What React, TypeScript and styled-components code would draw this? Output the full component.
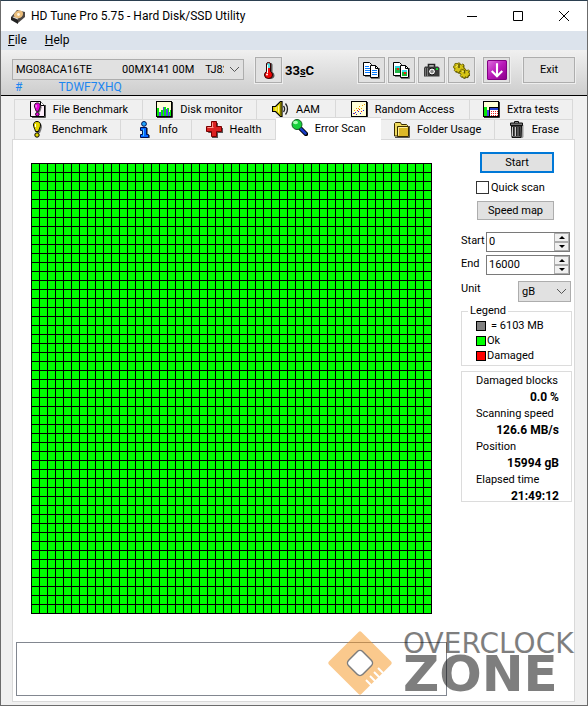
import React, { useState } from "react";
import styled, { createGlobalStyle, css } from "styled-components";

const UI = `Roboto, "Liberation Sans", Arial, sans-serif`;

const GlobalStyle = createGlobalStyle`
  * { box-sizing: border-box; }
  body { margin: 0; background: #f0f0f0; color: #000; font: 11px/14px ${UI}; }
  button, input, select, textarea { font: inherit; color: inherit; margin: 0; border-radius: 0; }
`;

const Window = styled.div`
  position: relative;
  display: flex;
  flex-direction: column;
  min-height: 100vh;
  border: 1px solid #6b6b6b;
  border-top-color: #2b3f50;
  background: #f0f0f0;
`;

const TitleBar = styled.header`
  display: flex;
  align-items: center;
  height: 30px;
  padding-left: 8px;
  background: #fff;
  font: 12px/16px ${UI};
`;

const Title = styled.h1`
  flex: 1;
  margin: 0 0 0 5px;
  font: inherit;
  white-space: nowrap;
`;

const CaptionButton = styled.button`
  display: grid;
  place-items: center;
  width: 46px;
  height: 30px;
  padding: 0;
  border: 0;
  background: none;
`;

const MenuBar = styled.nav`
  display: flex;
  gap: 18px;
  height: 19px;
  padding-left: 7px;
  background: #dce3ec;
`;

const MenuItem = styled.button`
  padding: 0;
  border: 0;
  background: none;
  font: 12px/19px ${UI};
`;

const Toolbar = styled.div`
  display: flex;
  align-items: flex-start;
  height: 46px;
  padding: 7px 12px 0 11px;
  border-bottom: 1px solid #000;
  background: linear-gradient(#f0f0f0, #cdcdcd);
`;

const DriveBlock = styled.div`
  width: 232px;
  padding-top: 2px;
`;

const Serial = styled.div`
  display: flex;
  gap: 36px;
  padding-left: 3px;
  font-size: 12px;
  line-height: 14px;
  color: #1e86f0;
`;

const SelectBox = styled.div`
  display: grid;
  align-items: center;
  height: 21px;
  border: 1px solid #adadad;
  background: #e1e1e1;
  > * { grid-area: 1 / 1; }
  > svg { justify-self: end; margin-right: 3px; pointer-events: none; }
`;

const Select = styled.select`
  appearance: none;
  width: 100%;
  height: 19px;
  padding: 0 19px 0 3px;
  border: 0;
  background: none;
  white-space: pre;
`;

const IconButton = styled.button<{ $gap?: number; $wide?: boolean }>`
  display: grid;
  place-items: center;
  flex: none;
  width: ${(p) => (p.$wide ? 52 : 27)}px;
  height: 26px;
  margin-left: ${(p) => p.$gap ?? 3}px;
  padding: 0;
  border: 1px solid #adadad;
  background: #e1e1e1;
  box-shadow: 0 0 0 1px #eeeeee;
`;

const Temperature = styled.output`
  flex: 1;
  padding: 6px 0 0 3px;
  font: bold 13px/16px ${UI};
  small { font-size: 11px; text-decoration: underline; }
`;

const Tabs = styled.div`
  margin-top: 3px;
  padding: 0 14px 0 13px;
`;

const TabRow = styled.div`
  display: flex;
  height: 20px;
  border-left: 1px solid #d9d9d9;
`;

const Tab = styled.button<{ $grow: number; $active?: boolean }>`
  display: flex;
  flex: ${(p) => p.$grow} 1 0;
  align-items: center;
  justify-content: center;
  gap: 7px;
  min-width: 0;
  padding: 0;
  border: solid #d9d9d9;
  border-width: 1px 1px 0 0;
  background: #f0f0f0;
  white-space: nowrap;
  svg { flex: none; }
  ${(p) =>
    p.$active &&
    css`
      position: relative;
      z-index: 1;
      align-items: flex-start;
      height: 23px;
      margin-top: -2px;
      padding-top: 3px;
      line-height: 16px;
      border-width: 1px 0 0;
      background: #fff;
      svg { margin-top: -2px; }
    `}
`;

const Panel = styled.main`
  display: grid;
  flex: 1;
  grid-template-columns: minmax(0, 1fr) 111px;
  grid-template-rows: 1fr auto;
  margin: 0 12px 3px 11px;
  padding: 12px 2px 5px 3px;
  border: 1px solid #d9d9d9;
  background: #fff;
`;

const BlockMap = styled.div`
  display: grid;
  grid-template-columns: repeat(50, 1fr);
  grid-auto-rows: 8px;
  gap: 1px;
  align-self: start;
  margin: 11px 29px 28px 15px;
  padding: 1px;
  background: #000;
`;

const Block = styled.i`
  background: #00ff00;
`;

const Log = styled.textarea`
  display: block;
  width: auto;
  height: 54px;
  margin-right: 14px;
  border: 1px solid #828790;
  background: #fff;
  resize: none;
`;

const Side = styled.aside`
  display: flex;
  flex-direction: column;
`;

const PushButton = styled.button<{ $primary?: boolean }>`
  height: ${(p) => (p.$primary ? 21 : 19)}px;
  margin: 0 18px 0 ${(p) => (p.$primary ? 19 : 16)}px;
  padding: 0;
  border: ${(p) => (p.$primary ? "2px solid #0078d7" : "1px solid #adadad")};
  background: #e1e1e1;
`;

const Check = styled.label`
  display: flex;
  align-items: center;
  gap: 2px;
  margin: 8px 0 7px 15px;
  height: 13px;
  white-space: nowrap;
  input {
    appearance: none;
    width: 13px;
    height: 13px;
    border: 1px solid #333;
    background: #fff;
  }
  input:checked { background: #0078d7; }
`;

const Field = styled.div<{ $first?: boolean }>`
  display: grid;
  grid-template-columns: 25px 84px;
  align-items: start;
  margin-top: ${(p) => (p.$first ? 12 : 3)}px;
  label { padding-top: 2px; }
`;

const Spin = styled.div`
  display: grid;
  grid-template-columns: 1fr 15px;
  grid-template-rows: 9px 9px;
  height: 20px;
  border: 1px solid #7a7a7a;
  background: #fff;
  input {
    grid-row: 1 / 3;
    width: 100%;
    min-width: 0;
    padding: 0 2px;
    border: 0;
    outline: 0;
    background: none;
  }
  button {
    display: grid;
    place-items: center;
    padding: 0;
    border: 1px solid #adadad;
    background: #f0f0f0;
  }
`;

const UnitRow = styled.div`
  display: grid;
  grid-template-columns: 57px 53px;
  align-items: start;
  margin-top: 6px;
  label { padding-top: 1px; }
`;

const Legend = styled.fieldset`
  height: 62px;
  margin: 2px 0 0;
  padding: 0 0 0 14px;
  border: 1px solid #dcdcdc;
  legend { margin-left: -8px; padding: 0 2px; line-height: 14px; }
`;

const LegendItem = styled.div<{ $color: string; $indent?: boolean }>`
  display: flex;
  align-items: center;
  gap: ${(p) => (p.$indent ? 5 : 1)}px;
  height: 15px;
  &::before {
    content: "";
    width: 8px;
    height: 8px;
    border: 1px solid #000;
    background: ${(p) => p.$color};
  }
`;

const Stats = styled.dl`
  height: 131px;
  margin: 5px 0 0;
  padding: 2px 12px 0 14px;
  border: 1px solid #dcdcdc;
  dt { height: 15px; line-height: 14px; }
  dd { height: 18px; margin: 0; font-weight: bold; font-size: 12px; line-height: 16px; text-align: right; }
`;

const Watermark = styled.div`
  position: absolute;
  right: 8px;
  bottom: 8px;
  display: flex;
  gap: 9px;
  align-items: center;
  opacity: 0.5;
  pointer-events: none;
`;

const Brand = styled.div`
  width: 176px;
  font: 28px/22px "DejaVu Sans", sans-serif;
  strong { display: block; font-size: 50px; line-height: 38px; font-weight: bold; }
`;

const Chevron = () => (
  <svg width="11" height="7" viewBox="0 0 11 7" fill="none" stroke="#555">
    <path d="M1 1l4.500 4.500L10 1" />
  </svg>
);

const Svg = ({ children, size = 17 }: { children: React.ReactNode; size?: number }) => (
  <svg width={size} height={size} viewBox="0 0 17 17" aria-hidden="true">
    {children}
  </svg>
);

const DriveIcon = () => (
  <Svg size={17}>
    <path d="M2 9L8 2l8 2v5l-7 6-7-4z" fill="#4b4744" />
    <path d="M2 9l7 3v4l-7-4z" fill="#222" />
    <ellipse cx="9.500" cy="6.500" rx="4.800" ry="3.800" fill="#e9bd7c" transform="rotate(-30 9.500 6.500)" />
    <circle cx="9.500" cy="6.500" r="1.400" fill="#fff7e4" />
    <path d="M4 9l5 2" stroke="#ddd" />
  </Svg>
);

const Thermometer = () => (
  <Svg>
    <path d="M9 1h2.500l1 1.500V10q2 1 2 3.500T11 17H8z" fill="#555" />
    <path d="M6.500 2Q6.500.5 8.500.5t2 1.500v7.500q2 1 2 3.500 0 3.500-4 3.500t-4-3.500q0-2.500 2-3.500z" fill="#ee0505" stroke="#300" />
    <path d="M7 2.500Q7 1 8.500 1T10 2.500V6H7z" fill="#4fe3e8" />
    <path d="M7.500 3v8" stroke="#fff" />
    <circle cx="7" cy="12.500" r="1" fill="#fff" />
  </Svg>
);

const CopyPages = ({ image }: { image?: boolean }) => (
  <Svg>
    <path d="M2 14.500h6M16.500 6v10.500H8" stroke="#777" fill="none" />
    <path d="M.5.5h6l2 2v11h-8z" fill="#fff" stroke="#000" />
    <path d="M7.500 3.500h5l3 3v9h-8z" fill="#fff" stroke="#000" />
    <path d="M12.500 3.500v3h3" fill="none" stroke="#000" />
    {image ? (
      <>
        <path d="M2 4h5v7H2z" fill="#21b447" />
        <path d="M2 4h5v2H2z" fill="#2bd0df" />
        <path d="M9 8h5v6H9z" fill="#18b536" />
        <path d="M9 8h5v2H9z" fill="#3bdff0" />
        <path d="M11 10h2v2h-2zM4 6h2v2H4z" fill="#f02010" />
      </>
    ) : (
      <path d="M2 4.500h4M2 6.500h5M2 8.500h5M2 10.500h5M9 8.500h5M9 10.500h5M9 12.500h5" stroke="#087cff" />
    )}
  </Svg>
);

const Camera = () => (
  <Svg>
    <path d="M5.500 5V2.500h6V5" fill="none" stroke="#222" strokeWidth="1.600" />
    <path d="M1 6l1-1.500h13L16.500 6v8.500H1z" fill="#3a3a3a" />
    <path d="M2.500 6v8M4.500 6v8" stroke="#777" />
    <circle cx="9" cy="9.500" r="3.500" fill="#eee" stroke="#111" />
    <circle cx="9" cy="9.500" r="1.700" fill="#888" />
    <path d="M13 6h2v2h-2z" fill="#16dc35" />
  </Svg>
);

const cog = "M-1-5h2l.5 1.500 1.500.5 1.500-1 1.200 1.200-1 1.500.5 1.300H6v2l-1.500.500-.5 1.500-1.500 1L1 4 .5 5.500h-2L-2 4l-1.500.5L-5 3l1-1.500L-4.500.5-6 0v-1.500L-4-2l-.5-2 1.500-.8 1.300.8z";

const Gears = () => (
  <Svg>
    <path d={cog} transform="translate(6.500 6.500) scale(.92)" fill="#443f00" />
    <path d={cog} transform="translate(5.800 5.600) scale(.92)" fill="#d6c414" stroke="#6d6400" />
    <path d={cog} transform="translate(12 12) scale(.86)" fill="#443f00" />
    <path d={cog} transform="translate(11.500 11.200) scale(.86)" fill="#d6c414" stroke="#6d6400" />
    <path d="M6 2v4M11.500 8v3.500" stroke="#5d5600" strokeWidth="1.500" />
    <path d="M3.500 4.500l1-1M9.500 10l1-1" stroke="#fff8b0" />
  </Svg>
);

const DownArrow = () => (
  <svg width="20" height="20" viewBox="0 0 19 19">
    <defs>
      <linearGradient id="save" x2="1" y2="1">
        <stop stopColor="#df70df" />
        <stop offset=".5" stopColor="#b818b8" />
        <stop offset="1" stopColor="#8a008a" />
      </linearGradient>
    </defs>
    <rect x=".5" y=".5" width="18" height="18" rx="1" fill="url(#save)" stroke="#820082" />
    <path d="M9.500 3v12M4.500 10.500l5 5 5-5" fill="none" stroke="#fff" strokeWidth="2" />
  </svg>
);

const Mark = ({ fill }: { fill: string }) => (
  <>
    <path d="M10 2q4 0 4 4-.5 3-2 6H9z" fill="#777" />
    <path d="M9 .5c2.300 0 3.500 1.400 3.500 3.500 0 2.200-1.500 4-2 6.500h-3c-.5-2.500-2-4.300-2-6.500C5.500 1.900 6.700.5 9 .5z" fill={fill} stroke="#000" />
    <circle cx="9" cy="14" r="2.200" fill={fill} stroke="#000" />
    <path d="M7.500 3v3" stroke="#fff" />
  </>
);

const FileBench = () => (
  <Svg>
    <path d="M3 16.500h13.500V4" fill="none" stroke="#555" />
    <path d="M1.500.5h10l4 4v11h-14z" fill="#ffeefb" stroke="#000" />
    <path d="M11.500.5v4h4" fill="#fff" stroke="#000" />
    <g transform="translate(.8 1.500) scale(.84)"><Mark fill="#e500d8" /></g>
  </Svg>
);

const Framed = ({ children }: { children: React.ReactNode }) => (
  <Svg>
    <path d="M1 16.500h15.500V1" fill="none" stroke="#333" />
    <rect x=".5" y=".5" width="15" height="15" fill="#ffffd8" stroke="#000" />
    {children}
  </Svg>
);

const DiskIcon = () => (
  <Framed>
    <path d="M1 7h2v4h2V9h2v2h1V6h2v3h1V7h2v4h1V9h1v6H1z" fill="#08e808" />
    <path d="M3 11h2v4H3zM7 6h1v9H7zM10 8h2v7h-2zM13 11h1v4h-1z" fill="#5447ee" />
  </Framed>
);

const RandomIcon = () => (
  <Framed>
    <path d="M2 12h1v1H2zM4 11h1v1H4zM7 10h1v1H7zM9 12h1v1H9zM12 9h1v1h-1zM5 13h1v1H5z" fill="#2222ee" />
    <path d="M3 9h1v1H3zM5 7h1v1H5zM8 5h1v1H8zM10 7h1v1h-1zM13 3h1v1h-1zM11 4h1v1h-1zM7 7h1v1H7z" fill="#e8a000" />
    <path d="M6 9h1v1H6zM8 8h1v1H8zM10 10h1v1h-1zM3 12h1v1H3z" fill="#ee1b1b" />
  </Framed>
);

const ExtraIcon = () => (
  <Framed>
    <path d="M1 6h3v3h2v6H1z" fill="#08e808" />
    <path d="M4 9h2v6H4z" fill="#4a42e8" />
    <rect x="6.500" y="6.500" width="9" height="9" fill="#fff" stroke="#000" />
    <path d="M7 8h8" stroke="#2440d0" strokeWidth="2" />
    <path d="M8 10.500h7M8 12.500h7M8 14.500h7" stroke="#e22" strokeDasharray="1 1" />
  </Framed>
);

const Speaker = () => (
  <Svg>
    <path d="M.5 5.500h3l5-5h1.500v15H8.500l-5-5h-3z" fill="#e5d400" stroke="#000" strokeWidth="1.200" />
    <path d="M4 6v4M6.500 4.500v7" stroke="#fff68a" />
    <path d="M8.500 1.500v13" stroke="#7d7400" />
    <path d="M11.500 5q2.200 3 0 6M13.500 2.500q4 5.500 0 11" fill="none" stroke="#222" strokeWidth="1.300" />
  </Svg>
);

const BenchIcon = () => <Svg><Mark fill="#e6d800" /></Svg>;

const InfoIcon = () => (
  <Svg>
    <path d="M12 7h1v7h2v3H6" fill="#777" />
    <circle cx="9" cy="2.900" r="2.400" fill="#22a6ff" stroke="#001050" />
    <path d="M5.500 6.500h6v7h2v3h-8v-3h2v-4h-2z" fill="#0868ff" stroke="#001050" />
    <path d="M8.500 8v7" stroke="#55c8ff" />
  </Svg>
);

const Cross = () => (
  <Svg>
    <path d="M7 2h5v5h5v5h-5v5H6v-5H2" fill="#555" />
    <path d="M5.500.5h5v5h5v5h-5v5h-5v-5h-5v-5h5z" fill="#db2222" stroke="#780000" />
    <path d="M6.500 6.500v-5M1.500 6.500h6" stroke="#ff9a8d" />
  </Svg>
);

const Magnifier = () => (
  <Svg>
    <path d="M9 9l6 6" stroke="#000" strokeWidth="4.500" strokeLinecap="round" />
    <path d="M9.500 9.500l5 5" stroke="#163bc4" strokeWidth="2.500" strokeLinecap="round" />
    <circle cx="6" cy="5.500" r="5" fill="#18d03c" stroke="#145b20" />
    <ellipse cx="4.500" cy="3.500" rx="2.500" ry="1.800" fill="#a6ffb0" />
  </Svg>
);

const Folder = () => (
  <Svg>
    <path d="M2 16.500h14.500V5" fill="none" stroke="#555" />
    <path d="M1.500 15V2.500l1-1h5l1 2h5l1 1V15z" fill="#f0dc60" stroke="#3b2c00" />
    <path d="M4.500 5.500h11v10h-11z" fill="#dcb828" stroke="#3b2c00" />
    <path d="M5.500 14.500v-8h9" fill="none" stroke="#fff09a" />
  </Svg>
);

const Trash = () => (
  <Svg>
    <path d="M14 4h1.500v12l-1 1H5" fill="#999" />
    <path d="M6.500 2V.5h4V2" fill="none" stroke="#111" />
    <path d="M2.500 2h12v2.500h-12z" fill="#777" stroke="#111" />
    <path d="M3.500 5h10l-.5 11.500H4z" fill="#666" stroke="#111" />
    <path d="M5.500 6v9M8.500 6v9M11.500 6v9" stroke="#222" strokeWidth="1.500" />
    <path d="M4.500 6v9M7.500 6v9" stroke="#ccc" />
  </Svg>
);

const topTabs = [
  { label: "File Benchmark", icon: <FileBench />, grow: 128 },
  { label: "Disk monitor", icon: <DiskIcon />, grow: 114 },
  { label: "AAM", icon: <Speaker />, grow: 79 },
  { label: "Random Access", icon: <RandomIcon />, grow: 134 },
  { label: "Extra tests", icon: <ExtraIcon />, grow: 103 },
];

const bottomTabs = [
  { label: "Benchmark", icon: <BenchIcon />, grow: 106 },
  { label: "Info", icon: <InfoIcon />, grow: 71 },
  { label: "Health", icon: <Cross />, grow: 83 },
  { label: "Error Scan", icon: <Magnifier />, grow: 106 },
  { label: "Folder Usage", icon: <Folder />, grow: 114 },
  { label: "Erase", icon: <Trash />, grow: 78 },
];

const stats = [
  ["Damaged blocks", "0.0 %"],
  ["Scanning speed", "126.6 MB/s"],
  ["Position", "15994 gB"],
  ["Elapsed time", "21:49:12"],
];

const NumberField = ({ id, label, initial, first }: { id: string; label: string; initial: number; first?: boolean }) => {
  const [value, setValue] = useState(initial);
  return (
    <Field $first={first}>
      <label htmlFor={id}>{label}</label>
      <Spin>
        <input id={id} value={value} onChange={(e) => setValue(Number(e.target.value) || 0)} />
        <button aria-label={`Increase ${label}`} onClick={() => setValue(value + 1)}>
          <svg width="6" height="3" viewBox="0 0 6 3"><path d="M0 3l3-3 3 3z" /></svg>
        </button>
        <button aria-label={`Decrease ${label}`} onClick={() => setValue(Math.max(0, value - 1))}>
          <svg width="6" height="3" viewBox="0 0 6 3"><path d="M0 0l3 3 3-3z" /></svg>
        </button>
      </Spin>
    </Field>
  );
};

export default function App() {
  const [active, setActive] = useState("Error Scan");
  return (
    <>
      <GlobalStyle />
      <Window>
        <TitleBar>
          <DriveIcon />
          <Title>HD Tune Pro 5.75 - Hard Disk/SSD Utility</Title>
          <CaptionButton aria-label="Minimize">
            <svg width="10" height="10"><path d="M0 5.500h10" stroke="#000" /></svg>
          </CaptionButton>
          <CaptionButton aria-label="Maximize">
            <svg width="10" height="10"><path d="M.5.5h9v9h-9z" fill="none" stroke="#000" /></svg>
          </CaptionButton>
          <CaptionButton aria-label="Close">
            <svg width="10" height="10"><path d="M0 0l10 10M10 0L0 10" stroke="#000" /></svg>
          </CaptionButton>
        </TitleBar>
        <MenuBar>
          <MenuItem><u>F</u>ile</MenuItem>
          <MenuItem><u>H</u>elp</MenuItem>
        </MenuBar>
        <Toolbar>
          <DriveBlock>
            <SelectBox>
              <Select aria-label="Drive">
                <option>{"MG08ACA16TE" + "\u00a0".repeat(11) + "00MX141 00M" + "\u00a0".repeat(4) + "TJ82"}</option>
              </Select>
              <Chevron />
            </SelectBox>
            <Serial><span>#</span><span>TDWF7XHQ</span></Serial>
          </DriveBlock>
          <IconButton $gap={11} aria-label="Temperature"><Thermometer /></IconButton>
          <Temperature>33<small>s</small>C</Temperature>
          <IconButton $gap={0} aria-label="Copy text"><CopyPages /></IconButton>
          <IconButton aria-label="Copy image"><CopyPages image /></IconButton>
          <IconButton aria-label="Screenshot"><Camera /></IconButton>
          <IconButton aria-label="Options"><Gears /></IconButton>
          <IconButton $gap={8} aria-label="Save"><DownArrow /></IconButton>
          <IconButton $gap={13} $wide>Exit</IconButton>
        </Toolbar>
        <Tabs role="tablist">
          {[topTabs, bottomTabs].map((row, i) => (
            <TabRow key={i}>
              {row.map((t) => (
                <Tab key={t.label} role="tab" aria-selected={active === t.label} $grow={t.grow} $active={active === t.label} onClick={() => setActive(t.label)}>
                  {t.icon}
                  {t.label}
                </Tab>
              ))}
            </TabRow>
          ))}
        </Tabs>
        <Panel>
          <BlockMap role="img" aria-label="Scanned blocks">
            {Array.from({ length: 2500 }, (_, i) => <Block key={i} />)}
          </BlockMap>
          <Side>
            <PushButton $primary>Start</PushButton>
            <Check><input type="checkbox" />Quick scan</Check>
            <PushButton>Speed map</PushButton>
            <NumberField id="start" label="Start" initial={0} first />
            <NumberField id="end" label="End" initial={16000} />
            <UnitRow>
              <label htmlFor="unit">Unit</label>
              <SelectBox>
                <Select id="unit"><option>gB</option></Select>
                <Chevron />
              </SelectBox>
            </UnitRow>
            <Legend>
              <legend>Legend</legend>
              <LegendItem $color="#808080" $indent>= 6103 MB</LegendItem>
              <LegendItem $color="#00ff00">Ok</LegendItem>
              <LegendItem $color="#ff0000">Damaged</LegendItem>
            </Legend>
            <Stats>
              {stats.map(([name, value]) => (
                <React.Fragment key={name}>
                  <dt>{name}</dt>
                  <dd>{value}</dd>
                </React.Fragment>
              ))}
            </Stats>
          </Side>
          <Log aria-label="Log" readOnly />
        </Panel>
        <Watermark>
          <svg width="68" height="68" viewBox="0 0 68 68">
            <rect x="11" y="11" width="46" height="46" rx="2" fill="#f7941d" transform="rotate(45 34 34)" />
            <rect x="24" y="24" width="20" height="20" rx="4" fill="#fff" stroke="#000" strokeWidth="1.500" transform="rotate(45 34 34)" />
            <path d="M52 39l5 5M48 43l6 6M44 47l6 6M40 51l6 6" stroke="#fff" strokeWidth="2" />
          </svg>
          <Brand>OVERCLOCK<strong>ZONE</strong></Brand>
        </Watermark>
      </Window>
    </>
  );
}
